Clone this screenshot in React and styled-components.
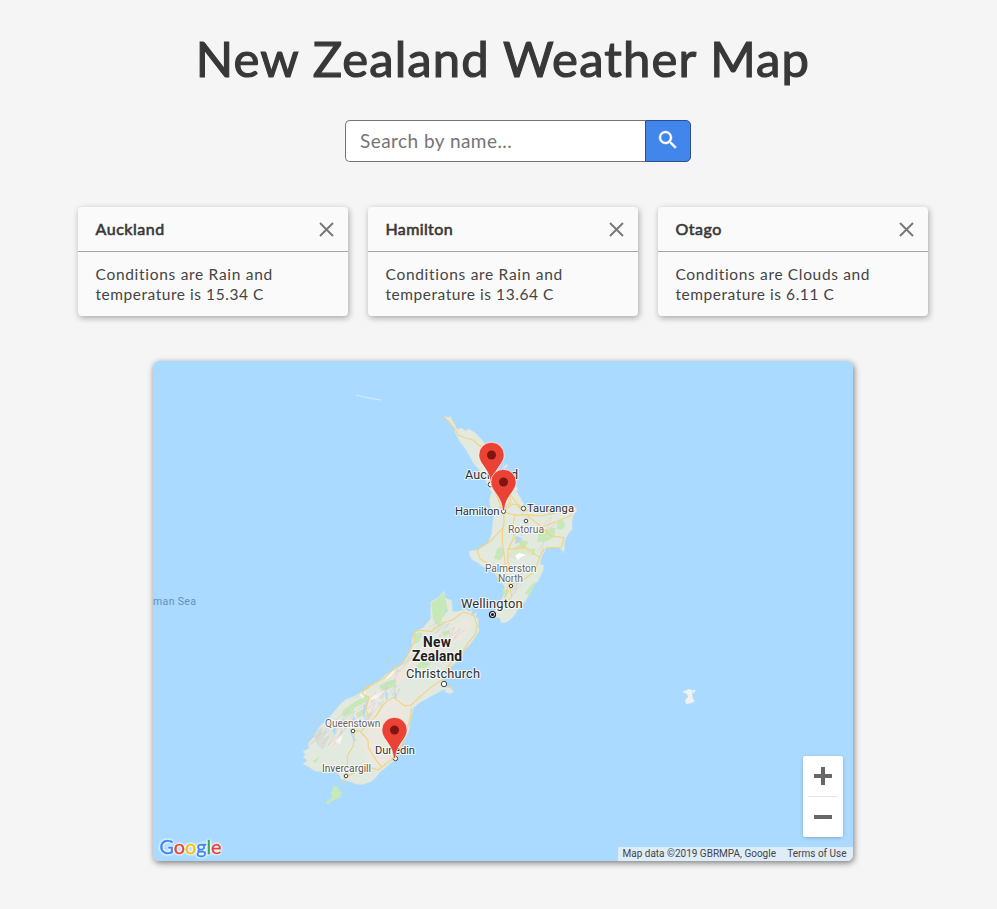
import React from "react";
import styled, { createGlobalStyle } from "styled-components";

const GlobalStyle = createGlobalStyle`
  * { box-sizing: border-box; }
  body { margin: 0; background: #f5f5f5; color: #383838; font-family: Muli, Lato, sans-serif; }
`;

const Page = styled.main`
  width: 850px;
  height: 909px;
  margin-left: 78px;
  display: flex;
  flex-direction: column;
  align-items: center;
`;

const Title = styled.h1`
  margin: 27px 0 0;
  height: 62px;
  line-height: 62px;
  font-size: 49px;
  font-weight: 400;
  letter-spacing: 1.15px;
  white-space: nowrap;
  -webkit-text-stroke: 1.2px #383838;
`;

const SearchForm = styled.form`
  display: flex;
  width: 346px;
  height: 42px;
  margin: 31px 0 0 30px;
`;

const SearchInput = styled.input`
  width: 300px;
  height: 42px;
  padding: 0 15px 2px 14px;
  border: 1px solid #757575;
  border-right: 0;
  border-radius: 5px 0 0 5px;
  background: #fff;
  font-family: inherit;
  font-size: 19px;
  letter-spacing: 0.45px;
  outline: none;
  &::placeholder { color: #757575; opacity: 1; }
`;

const SearchButton = styled.button`
  width: 46px;
  height: 42px;
  padding: 0 1px 3px 0;
  display: grid;
  place-items: center;
  border: 1px solid #27508c;
  border-radius: 0 5px 5px 0;
  background: #4285eb;
`;

const Cards = styled.section`
  display: flex;
  gap: 20px;
  margin-top: 45px;
`;

const Card = styled.article`
  width: 270px;
  height: 109px;
  border-radius: 4px;
  background: #fafafa;
  box-shadow: 1px 2px 6px rgba(0, 0, 0, 0.32);
`;

const CardHeader = styled.header`
  height: 45px;
  padding: 0 14px 0 17.5px;
  display: flex;
  align-items: center;
  justify-content: space-between;
  border-bottom: 1px solid #a5a5a5;
`;

const CardTitle = styled.h2`
  margin: 0;
  font-size: 16px;
  font-weight: 400;
  line-height: 20px;
  letter-spacing: ${(p) => p.$tracking}px;
  -webkit-text-stroke: 0.6px #383838;
`;

const CloseButton = styled.button`
  display: grid;
  padding: 0;
  border: 0;
  background: none;
`;

const CardBody = styled.p`
  margin: 0;
  padding: 12px 0 0 17.5px;
  font-size: 15.5px;
  line-height: 20px;
  color: #444;
  white-space: nowrap;
`;

const Line = styled.span`
  display: block;
  letter-spacing: ${(p) => p.$tracking}px;
`;

const MapFrame = styled.section`
  position: relative;
  width: 700px;
  height: 500px;
  border-radius: 6px;
  overflow: hidden;
  background: #aadaff;
`;

const MapShadow = styled.div`
  border-radius: 6px;
  margin-top: 45px;
  box-shadow: 1px 2px 6px rgba(0, 0, 0, 0.5);
`;

const MapCanvas = styled.svg`
  display: block;
  width: 700px;
  height: 500px;
  font-family: Roboto, sans-serif;
`;

const Wordmark = styled.text`
  font-family: Lato, sans-serif;
  font-size: 20px;
  filter: drop-shadow(0 0 1px #fff) drop-shadow(0 0 1px #fff);
`;

const ZoomControls = styled.div`
  position: absolute;
  right: 10px;
  bottom: 24px;
  width: 40px;
  height: 81px;
  padding: 0 5px;
  border-radius: 2px;
  background: #fff;
  box-shadow: 0 1px 4px -1px rgba(0, 0, 0, 0.35);
`;

const ZoomButton = styled.button`
  width: 30px;
  height: 40px;
  padding: 0;
  display: grid;
  place-items: center;
  border: 0;
  background: none;
  & + & { border-top: 1px solid #e6e6e6; height: 41px; }
`;

const Attribution = styled.footer`
  position: absolute;
  right: 0;
  bottom: 0;
  width: 235px;
  height: 14px;
  padding: 0 6.5px 0 4.5px;
  display: flex;
  justify-content: space-between;
  background: rgba(245, 245, 245, 0.7);
  font: 10px/14px Roboto, sans-serif;
  color: #444;
  white-space: nowrap;
`;

const cities = [
  { name: "Auckland", tracking: 0.55, lines: [["Conditions are Rain and", 0.7], ["temperature is 15.34 C", 0.54]] },
  { name: "Hamilton", tracking: 0.38, lines: [["Conditions are Rain and", 0.7], ["temperature is 13.64 C", 0.54]] },
  { name: "Otago", tracking: 0.5, lines: [["Conditions are Clouds and", 0.65], ["temperature is 6.11 C", 0.54]] },
];

const SearchIcon = () => (
  <svg width="24" height="24" viewBox="0 0 24 24" fill="#fff" stroke="#fff" strokeWidth=".4">
    <path d="M15.5 14h-.79l-.28-.27A6.47 6.47 0 0 0 16 9.5 6.5 6.5 0 1 0 9.5 16c1.61 0 3.09-.59 4.23-1.57l.27.28v.79l5 4.99L20.49 19l-4.99-5zm-6 0C7.01 14 5 11.99 5 9.5S7.01 5 9.5 5 14 7.01 14 9.5 11.99 14 9.5 14z" />
  </svg>
);

const CloseIcon = () => (
  <svg width="15" height="15" viewBox="0 0 15 15">
    <path d="M1 1 14 14M14 1 1 14" stroke="#777" strokeWidth="1.9" />
  </svg>
);

const Land = (p) => <path fill="#e2e9df" stroke="#d3e3dc" strokeWidth="1.5" strokeLinejoin="round" {...p} />;
const Park = (p) => <path fill="#c7e8b9" {...p} />;
const Barren = (p) => <path fill="#eee7de" {...p} />;
const Relief = (p) => <path fill="none" stroke="#c9cfc9" strokeWidth="3" opacity=".5" {...p} />;
const Water = (p) => <path fill="#aadaff" {...p} />;
const Road = (p) => <path fill="none" stroke="#f6d27c" strokeWidth="3.3" strokeLinejoin="round" {...p} />;

const SouthIsland = () => (
  <g transform="translate(295 580) scale(.33333)">
    <Land d="M447 33 451 55 470 60 473 94 486 95 512 88 522 94 531 91 529 108 546 97 542 111 550 118 549 138 553 151 541 171 523 196 509 210 494 238 470 259 454 281 444 302 449 319 468 325 477 335 466 341 451 337 440 332 429 338 408 349 373 369 356 383 349 407 345 430 343 449 333 472 319 496 309 514 310 533 301 540 284 552 272 563 256 575 246 589 230 604 203 614 182 612 158 603 140 599 132 584 118 575 92 576 59 573 45 563 24 552 37 541 24 531 31 524 24 514 41 506 40 489 54 473 66 451 77 436 94 422 114 399 136 372 153 358 179 348 203 333 217 324 244 308 270 286 292 272 317 257 334 232 350 205 351 181 360 155 386 142 407 116 407 65 428 54Z" />
    <Barren d="M362 230 386 195 425 174 478 137 518 113 532 134 503 176 465 196 426 229 382 252 344 278 320 307 273 342 248 382 220 405 173 430 141 464 120 507 103 493 144 430 190 393 215 346 265 321 303 278Z" opacity=".9" />
    <Barren d="M216 455 243 384 295 350 342 371 347 404 327 438 330 475 292 506 262 555 232 562 210 520 187 485Z" opacity=".8" />
    <Park d="M409 68 430 55 445 36 452 61 459 92 442 113 432 143 414 118ZM358 163 376 156 384 166 368 188 357 192ZM443 157 462 150 466 161 447 173ZM362 258 386 240 407 252 391 263 370 265ZM254 316 283 301 304 298 302 319 273 330 256 326ZM145 389 173 370 208 349 224 347 218 364 180 382 171 398 148 412 141 402ZM180 402 202 388 211 397 193 415ZM52 544 76 529 62 550Z" />
    <Relief d="m402 142 25-17-14 22 33-16-26 29 43-31-31 43 47-31-17 32 35-27-21 32 34-30m-157 97 13-24-22 8-10 18m-13 9 29-24-35 42-12-3m-24 27 33-28-16 34-14 7m-25 14 21-18-13 33-22 4m-33 25 34-32-16 32 34-29m-74 50 29-22-17 34 41-36-17 43 42-45-22 45m-125 13 44-34-34 48 50-43-31 56 47-46m-129 71 42-51-19 38 37-28-44 61 45-42-30 47 47-48-30 48m-71-41 35-10-45 36 46-27-34 37 52-36m-55-36 36-29-20 36 34-17m26 45 28-39-11 49 24-30m126-101 19-20-13 31 24-21-13 31m75-230 17-16-10 30m-117 113 18-24-6 22m-98 105 22-30" />
    <Relief d="M59 470 84 440 71 468 94 449 80 479 101 468 84 507 69 494ZM245 350 263 327 280 322 262 356ZM205 410 229 397 218 426Z" fill="#d1d6d2" />
    <Barren fill="#fff" d="m276 286 25-19-9 21-20 13ZM194 345l21-17-11 30ZM236 345l35-14-22 24-25 5ZM122 483l22-22-9 33Z" opacity=".6" />
    <Water d="m206 371 7 5-4 31-5 2ZM175 406l5 9-6 17-4-5ZM273 337l5 2-1 20-5-3ZM299 333l5 8-2 17-4-3ZM118 438l5 5-4 22-5-8ZM166 444l7 21 11 18-7-1-11-22ZM249 367l6 1-3 8ZM438 332l14-4-4 8ZM451 97l7-4-4-9Z" />
    <Road d="M360 155 373 151 411 154 441 130 472 120 503 97 536 105 546 133 541 163 520 188 498 223 470 245 455 266 442 298 411 320 376 349 350 374 331 378 315 367 296 352 276 363 262 379 248 401 226 426 198 454 178 452M360 155 357 185 346 209 325 249 300 263 275 289 246 306 215 322 202 341 222 352 212 391 224 413M350 383 346 411 331 469 303 532 278 547 250 570 221 562 190 574 151 590 142 609M197 456 219 479 220 503 247 546 263 562M178 458 175 497 158 526 156 565M202 336 223 321M455 266 471 258M459 319 472 324" />
    <Park d="M116 618 130 621 134 635 143 636 135 653 115 661 98 674 93 667 111 652 108 637Z" />
  </g>
);

const NorthIsland = () => (
  <g transform="translate(435 405) scale(.33333)">
    <Land d="M28 34 42 37 48 32 49 43 57 53 66 73 80 69 91 78 100 72 119 81 130 93 142 105 154 122 166 147 171 172 166 194 180 207 191 205 207 214 217 213 225 235 220 244 244 259 258 281 268 299 285 308 309 323 337 324 355 326 378 313 407 305 425 309 424 319 415 331 411 350 412 373 403 382 390 405 388 421 389 433 384 444 377 430 351 426 333 431 322 451 317 464 315 478 326 480 325 496 315 516 309 529 295 541 284 567 271 589 250 611 234 637 216 651 199 654 194 639 179 637 172 627 185 611 195 593 206 570 209 545 191 520 171 496 143 485 129 474 110 463 102 446 104 438 132 433 159 413 170 386 173 351 179 316 167 309 163 286 170 261 155 236 146 209 123 184 113 171 103 152 92 133 74 109 60 82 57 68 39 50Z" />
    <Land d="m206 177 4 7 7-8-1 10-11 6ZM221 203l14 18 14 32-7 7-16-25Z" />
    <Park d="m185 434 14-11 10 22-14 20-18-4ZM218 450l17-20 20-12 2-15 23 7-8 17 29 5-5 19-32-5-21 16-16-3ZM310 385l14-15 17 5 6-8 14 3-3 26-20 12-32 4ZM367 354l14-11 11 18-11 13-15-3ZM202 553l22 3-12 23ZM234 487l22-5-9 10ZM190 308l9-9 8 17ZM270 565l22-29 13-8-22 44Z" />
    <Barren d="m213 444 23-15 49-2 12 17-28 18-45 4ZM184 473l28-23 8 25-20 26Z" opacity=".5" />
    <Relief d="m251 496 12-12-10 28 23-23m-47 65 28-31-20 43m73-128 18-31-11 41 22-26m-14-63 25-23-14 40 27-22m-126 37 25-14m-32 183 20-28-22 45 34-42" opacity=".4" />
    <Water d="m242 392 19 8-5 12-16 4ZM161 235l20 12-4 5-15-9ZM156 256l13 7-9 2ZM255 390l6-3 2 5Z" />
    <Barren fill="#fff" d="m240 452 13-8 19 5-14 7-9 9Z" />
    <Road d="M29 37 44 52 61 74 70 91 93 99 114 105 127 117 144 129 158 166 164 232 176 251 193 292 206 318 207 353 202 383 203 417 210 468 211 503 223 529 215 559 205 591 187 618M205 319 232 297 252 299 258 311M208 321 241 331 271 329 318 333 347 328 404 306M239 331 233 363 237 397 220 431 218 463 223 498M236 397 270 427 314 457 326 432M313 459 299 499 260 528 223 539 230 574 207 604M203 369 166 409 126 434 135 461 163 478 187 508 210 535M277 331 319 366 362 351 411 330M319 366 348 393 387 398 379 426 332 430M220 433 270 428M228 230 216 255 231 276 244 292 249 305 270 318 292 315M203 316 227 290 222 264" />
  </g>
);

// The tip of a pin sits on its own (x, y).
const Pin = ({ x, y }) => (
  <g transform={`translate(${x} ${y})`}>
    <path d="M-1 0C-1.5-8-4.2-12-8-17.5-11.2-22-12.7-25-12.7-28.5A12.7 12.7 0 0 1 12.7-28.5C12.7-25 11.2-22 8-17.5 4.2-12 1.5-8 1 0Z" fill="#ea4335" stroke="#fff" strokeWidth=".7" />
    <circle cy="-28.5" r="4.5" fill="#811411" />
  </g>
);

const Label = ({ x, y, size, w, color = "#303030", weight = 400, children }) => (
  <text x={x} y={y} fontSize={size} fontWeight={weight} textLength={w} fill={color} stroke="#fff" strokeOpacity=".75" strokeWidth="2.2" strokeLinejoin="round" paintOrder="stroke">{children}</text>
);

const towns = [
  [490.5, 484.5, 2.3], [503.5, 511.5, 2], [523.5, 508.5, 2.2], [526, 521, 1.8], [511, 586, 1.7],
  [444, 684, 2.7], [353, 731, 1.8], [395.5, 758.5, 2.2], [346, 776, 1.8],
];

const labels = [
  ["Auckland", 465, 478.5, 12.6, 53], ["Hamilton", 455, 515, 11.3, 44.5], ["Tauranga", 527, 512, 11.2, 47],
  ["Rotorua", 508, 533, 10.3, 36, "#666"], ["Palmerston", 485, 572, 10.4, 51.5, "#666"], ["North", 498, 582, 10.3, 25, "#666"],
  ["Wellington", 461, 607.5, 12.9, 61.5], ["New", 423, 647, 13.8, 28, "#202020", 700], ["Zealand", 412, 661, 13.8, 50, "#202020", 700],
  ["Christchurch", 406, 678, 12.8, 74], ["Queenstown", 325, 727, 10.3, 55.5, "#666"], ["Dunedin", 375, 754, 11.2, 40], ["Invercargill", 322, 772, 10.3, 49, "#555"],
];

const WeatherMap = () => (
  <MapCanvas viewBox="153 361 700 500">
    <SouthIsland />
    <NorthIsland />
    <path d="m356 395 11 3 14 2-11-2Z" stroke="#d8edfc" strokeWidth=".6" fill="none" />
    <path d="m682 692 7-3 3 1v3l1 6 2 2-3 2-6 1-1-4 3-3-1-3Zm10-2h4l-3 4Z" fill="#f0f2f0" />
    {towns.map(([x, y, r]) => <circle key={x} cx={x} cy={y} r={r} fill="#fff" stroke="#444" strokeWidth="1" />)}
    <circle cx="492.5" cy="614.5" r="3" fill="#fff" stroke="#111" strokeWidth="1.2" />
    <circle cx="492.5" cy="614.5" r="1.5" fill="#111" />
    {labels.map(([text, x, y, size, w, color, weight]) => (
      <Label key={text} x={x} y={y} size={size} w={w} color={color} weight={weight}>{text}</Label>
    ))}
    <text x="153" y="604.5" fontSize="10.5" textLength="43" fill="#5f8fc4">man Sea</text>
    <Pin x={491.5} y={483.5} />
    <Pin x={503.5} y={510.5} />
    <Pin x={394.5} y={758.5} />
    <Wordmark x="159.5" y="854" textLength="62" lengthAdjust="spacingAndGlyphs" strokeWidth=".4">
      <tspan fill="#4285f4" stroke="#4285f4">G</tspan><tspan fill="#ea4335" stroke="#ea4335">o</tspan><tspan fill="#fbbc05" stroke="#fbbc05">o</tspan><tspan fill="#4285f4" stroke="#4285f4">g</tspan><tspan fill="#34a853" stroke="#34a853">l</tspan><tspan fill="#ea4335" stroke="#ea4335">e</tspan>
    </Wordmark>
  </MapCanvas>
);

export default function App() {
  return (
    <>
      <GlobalStyle />
      <Page>
        <Title>New Zealand Weather Map</Title>
        <SearchForm>
          <SearchInput placeholder="Search by name..." />
          <SearchButton type="button" aria-label="Search"><SearchIcon /></SearchButton>
        </SearchForm>
        <Cards>
          {cities.map((city) => (
            <Card key={city.name}>
              <CardHeader>
                <CardTitle $tracking={city.tracking}>{city.name}</CardTitle>
                <CloseButton aria-label="Close"><CloseIcon /></CloseButton>
              </CardHeader>
              <CardBody>
                {city.lines.map(([text, tracking]) => <Line key={text} $tracking={tracking}>{text}</Line>)}
              </CardBody>
            </Card>
          ))}
        </Cards>
        <MapShadow>
          <MapFrame>
            <WeatherMap />
            <ZoomControls>
              <ZoomButton aria-label="Zoom in">
                <svg width="18" height="18"><path d="M0 9h18M9 0v18" stroke="#666" strokeWidth="4" /></svg>
              </ZoomButton>
              <ZoomButton aria-label="Zoom out">
                <svg width="18" height="18"><path d="M0 9h18" stroke="#666" strokeWidth="4" /></svg>
              </ZoomButton>
            </ZoomControls>
            <Attribution><span>Map data ©2019 GBRMPA, Google</span><span>Terms of Use</span></Attribution>
          </MapFrame>
        </MapShadow>
      </Page>
    </>
  );
}
